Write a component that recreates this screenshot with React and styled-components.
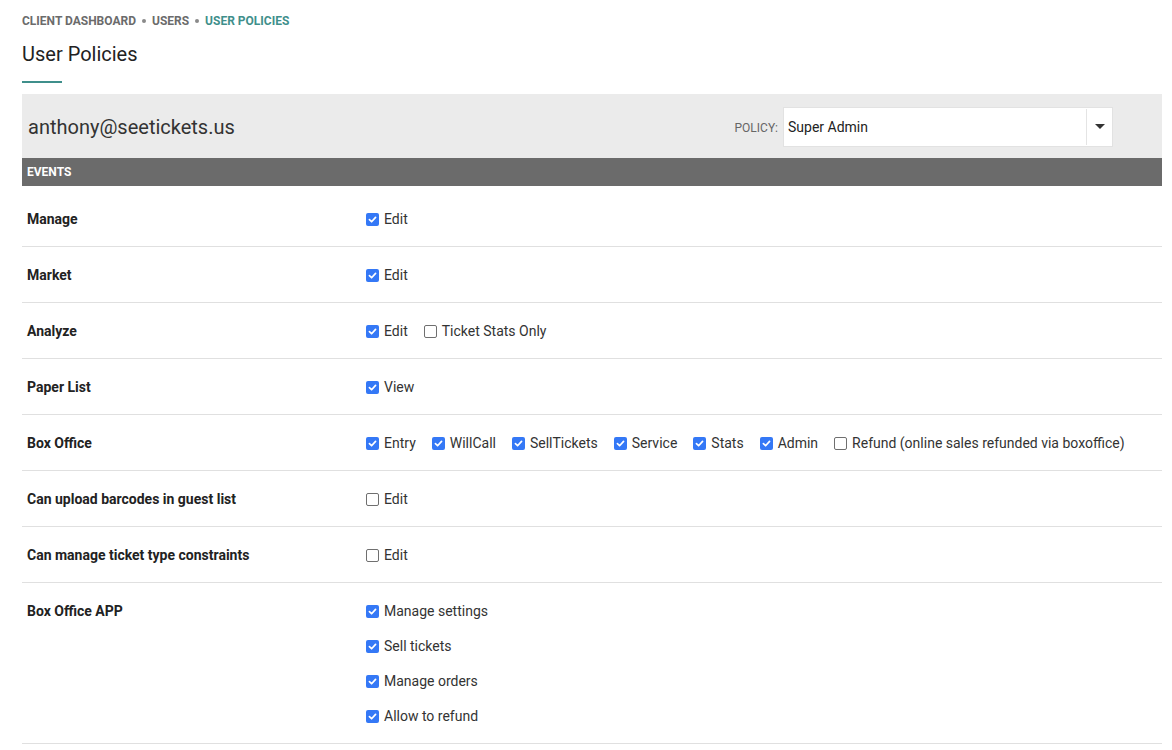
import React from 'react'
import styled, { createGlobalStyle } from 'styled-components'

const policies = [
  { name: 'Manage', options: [['Edit', true]] },
  { name: 'Market', options: [['Edit', true]] },
  { name: 'Analyze', options: [['Edit', true], ['Ticket Stats Only', false]] },
  { name: 'Paper List', options: [['View', true]] },
  {
    name: 'Box Office',
    options: [
      ['Entry', true], ['WillCall', true], ['SellTickets', true], ['Service', true],
      ['Stats', true], ['Admin', true], ['Refund (online sales refunded via boxoffice)', false],
    ],
  },
  { name: 'Can upload barcodes in guest list', options: [['Edit', false]] },
  { name: 'Can manage ticket type constraints', options: [['Edit', false]] },
  {
    name: 'Box Office APP',
    stacked: true,
    options: [['Manage settings', true], ['Sell tickets', true], ['Manage orders', true], ['Allow to refund', true]],
  },
]

const Check = ({ checked, label }) => <CheckLabel>
  <Box $checked={checked}>
    {checked && <svg width="9" height="9" viewBox="0 0 10 10">
      <path d="M1.6 5.2 L4 7.5 L8.4 2.6" fill="none" stroke="#fff" strokeWidth="1.9" strokeLinecap="round" strokeLinejoin="round" />
    </svg>}
  </Box>
  {label}
</CheckLabel>

export default () => <Page>
  <GlobalStyle />
  <Crumbs>
    <Crumb>Client Dashboard</Crumb>
    <Dot />
    <Crumb>Users</Crumb>
    <Dot />
    <Crumb $active>User Policies</Crumb>
  </Crumbs>
  <Title>User Policies</Title>
  <Underline />
  <UserBar>
    <Email>anthony@seetickets.us</Email>
    <PolicyField>
      <PolicyLabel>Policy:</PolicyLabel>
      <Select>
        <SelectValue>Super Admin</SelectValue>
        <SelectArrow>
          <svg width="10" height="5" viewBox="0 0 10 5"><path d="M0 0 H10 L5 5 Z" fill="#333" /></svg>
        </SelectArrow>
      </Select>
    </PolicyField>
  </UserBar>
  <SectionBar>Events</SectionBar>
  <Table>
    {policies.map(p => <Row key={p.name}>
      <RowName>{p.name}</RowName>
      <Options $stacked={p.stacked}>
        {p.options.map(([label, checked]) => <Check key={label} label={label} checked={checked} />)}
      </Options>
    </Row>)}
  </Table>
</Page>

const GlobalStyle = createGlobalStyle`
  body {
    margin: 0;
    background: #fff;
    font-family: Roboto, "Liberation Sans", Arial, sans-serif;
    color: #222;
  }
`

const Page = styled.div`
  padding: 14px 10px 0 22px;
`

const Crumbs = styled.div`
  display: flex;
  align-items: center;
  gap: 6px;
  height: 14px;
`

const Crumb = styled.span`
  font-size: 12px;
  font-weight: 700;
  text-transform: uppercase;
  color: ${p => p.$active ? '#3f8f8b' : '#6b6b6b'};
`

const Dot = styled.span`
  width: 4px;
  height: 4px;
  border-radius: 50%;
  background: #8a8a8a;
`

const Title = styled.h1`
  margin: 14px 0 0;
  font-size: 20px;
  font-weight: 400;
  line-height: 24px;
  color: #222;
`

const Underline = styled.div`
  width: 40px;
  height: 2px;
  margin-top: 15px;
  background: #3f8f8b;
`

const UserBar = styled.div`
  display: flex;
  align-items: center;
  justify-content: space-between;
  height: 64px;
  margin-top: 11px;
  padding: 0 49px 0 6px;
  background: #ebebeb;
`

const Email = styled.div`
  font-size: 20px;
  color: #333;
  margin-top: 1px;
`

const PolicyField = styled.div`
  display: flex;
  align-items: center;
  gap: 5px;
  margin-top: 1px;
`

const PolicyLabel = styled.span`
  font-size: 12px;
  text-transform: uppercase;
  color: #666;
  margin-top: 2px;
`

const Select = styled.div`
  display: flex;
  align-items: center;
  width: 330px;
  height: 40px;
  box-sizing: border-box;
  background: #fff;
  border: 1px solid #e2e2e2;
`

const SelectValue = styled.span`
  flex: 1;
  padding-left: 4px;
  font-size: 14px;
  color: #222;
`

const SelectArrow = styled.span`
  display: flex;
  align-items: center;
  justify-content: center;
  width: 25px;
  height: 36px;
  border-left: 1px solid #e4e4e4;
`

const SectionBar = styled.div`
  height: 28px;
  line-height: 28px;
  padding-left: 5px;
  background: #6b6b6b;
  color: #fff;
  font-size: 12px;
  font-weight: 700;
  text-transform: uppercase;
`

const Table = styled.div`
  margin-top: 5px;
`

const Row = styled.div`
  display: grid;
  grid-template-columns: 339px 1fr;
  padding: 18px 0 17px;
  border-bottom: 1px solid #e0e0e0;
`

const RowName = styled.div`
  padding-left: 5px;
  font-size: 14px;
  font-weight: 700;
  line-height: 20px;
  color: #222;
`

const Options = styled.div`
  display: flex;
  flex-direction: ${p => p.$stacked ? 'column' : 'row'};
  gap: ${p => p.$stacked ? '15px' : '16px'};
  padding-left: 5px;
`

const CheckLabel = styled.label`
  display: flex;
  align-items: center;
  gap: 5px;
  font-size: 14px;
  line-height: 20px;
  color: #333;
`

const Box = styled.span`
  display: flex;
  align-items: center;
  justify-content: center;
  width: 13px;
  height: 13px;
  box-sizing: border-box;
  border-radius: 2px;
  background: ${p => p.$checked ? '#3478f6' : '#fff'};
  border: ${p => p.$checked ? 'none' : '1px solid #6f6f6f'};
`
